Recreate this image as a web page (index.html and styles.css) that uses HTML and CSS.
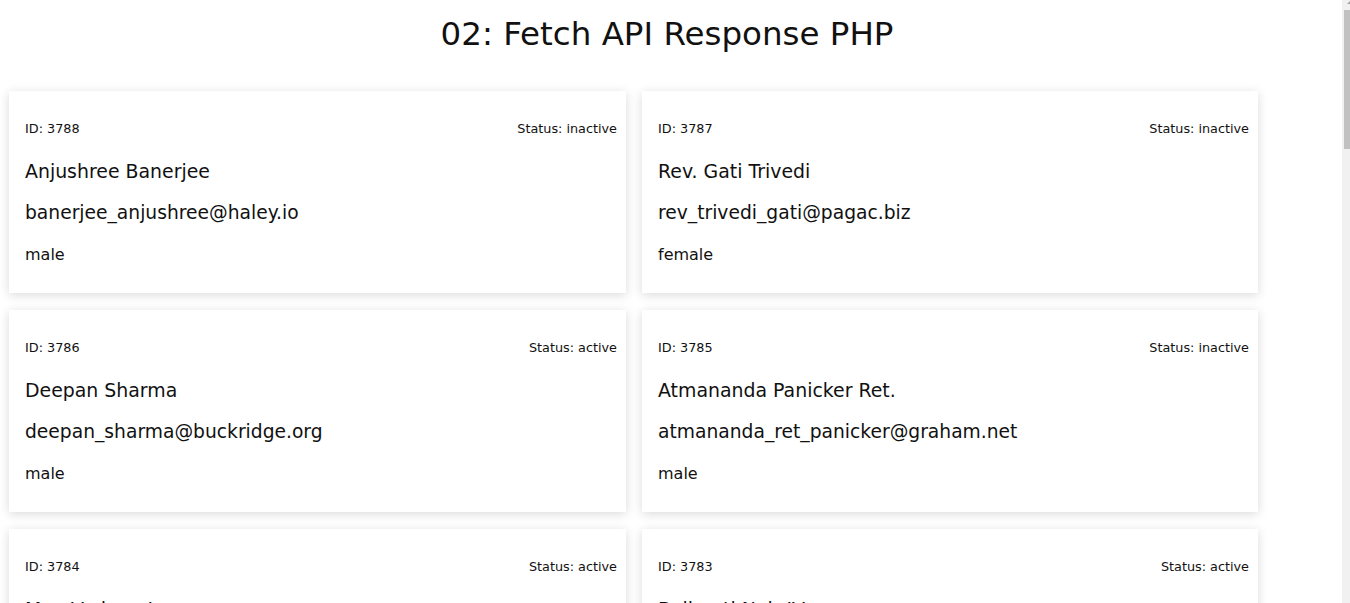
FILE: index.html
```html
<!DOCTYPE html>
<html lang="en">
<head>
<meta charset="utf-8">
<title>02: Fetch API Response PHP</title>
<link rel="stylesheet" href="styles.css">
</head>
<body>
<h1 class="title">02: Fetch API Response PHP</h1>
<div class="grid">
  <div class="card"><div class="meta"><span>ID: 3788</span><span>Status: inactive</span></div><div class="name">Anjushree Banerjee</div><div class="email">banerjee_anjushree@haley.io</div><div class="gender">male</div></div>
  <div class="card"><div class="meta"><span>ID: 3787</span><span>Status: inactive</span></div><div class="name">Rev. Gati Trivedi</div><div class="email">rev_trivedi_gati@pagac.biz</div><div class="gender">female</div></div>
  <div class="card"><div class="meta"><span>ID: 3786</span><span>Status: active</span></div><div class="name">Deepan Sharma</div><div class="email">deepan_sharma@buckridge.org</div><div class="gender">male</div></div>
  <div class="card"><div class="meta"><span>ID: 3785</span><span>Status: inactive</span></div><div class="name">Atmananda Panicker Ret.</div><div class="email">atmananda_ret_panicker@graham.net</div><div class="gender">male</div></div>
  <div class="card"><div class="meta"><span>ID: 3784</span><span>Status: active</span></div><div class="name">Mrs. Vedang Iyer</div><div class="email">iyer_vedang_mrs@kuhn.info</div><div class="gender">male</div></div>
  <div class="card"><div class="meta"><span>ID: 3783</span><span>Status: active</span></div><div class="name">Balimati Nair IV</div><div class="email">iv_nair_balimati@wolff.com</div><div class="gender">female</div></div>
  <div class="card"><div class="meta"><span>ID: 3782</span><span>Status: inactive</span></div><div class="name">Gopal Menon</div><div class="email">menon_gopal@rath.co</div><div class="gender">male</div></div>
  <div class="card"><div class="meta"><span>ID: 3781</span><span>Status: active</span></div><div class="name">Chandrakin Pillai</div><div class="email">pillai_chandrakin@hand.name</div><div class="gender">female</div></div>
  <div class="card"><div class="meta"><span>ID: 3780</span><span>Status: inactive</span></div><div class="name">Dhanu Desai</div><div class="email">desai_dhanu@mertz.biz</div><div class="gender">male</div></div>
  <div class="card"><div class="meta"><span>ID: 3779</span><span>Status: active</span></div><div class="name">Ekaling Kapoor</div><div class="email">kapoor_ekaling@kozey.org</div><div class="gender">male</div></div>
  <div class="card"><div class="meta"><span>ID: 3778</span><span>Status: inactive</span></div><div class="name">Himadri Gupta</div><div class="email">gupta_himadri@lind.io</div><div class="gender">female</div></div>
  <div class="card"><div class="meta"><span>ID: 3777</span><span>Status: active</span></div><div class="name">Jitendra Reddy</div><div class="email">reddy_jitendra@bode.net</div><div class="gender">male</div></div>
  <div class="card"><div class="meta"><span>ID: 3776</span><span>Status: inactive</span></div><div class="name">Kamala Joshi</div><div class="email">joshi_kamala@hills.com</div><div class="gender">female</div></div>
  <div class="card"><div class="meta"><span>ID: 3775</span><span>Status: active</span></div><div class="name">Lakshman Bhat</div><div class="email">bhat_lakshman@ryan.info</div><div class="gender">male</div></div>
  <div class="card"><div class="meta"><span>ID: 3774</span><span>Status: inactive</span></div><div class="name">Mahesh Naik</div><div class="email">naik_mahesh@feest.co</div><div class="gender">male</div></div>
  <div class="card"><div class="meta"><span>ID: 3773</span><span>Status: active</span></div><div class="name">Nandini Agarwal</div><div class="email">agarwal_nandini@moen.biz</div><div class="gender">female</div></div>
  <div class="card"><div class="meta"><span>ID: 3772</span><span>Status: inactive</span></div><div class="name">Omprakash Rao</div><div class="email">rao_omprakash@walsh.org</div><div class="gender">male</div></div>
  <div class="card"><div class="meta"><span>ID: 3771</span><span>Status: active</span></div><div class="name">Padma Chopra</div><div class="email">chopra_padma@sauer.net</div><div class="gender">female</div></div>
  <div class="card"><div class="meta"><span>ID: 3770</span><span>Status: inactive</span></div><div class="name">Rajesh Verma</div><div class="email">verma_rajesh@veum.io</div><div class="gender">male</div></div>
  <div class="card"><div class="meta"><span>ID: 3769</span><span>Status: active</span></div><div class="name">Sarita Mishra</div><div class="email">mishra_sarita@kunze.com</div><div class="gender">female</div></div>
  <div class="card"><div class="meta"><span>ID: 3768</span><span>Status: inactive</span></div><div class="name">Tanvi Saxena</div><div class="email">saxena_tanvi@bins.info</div><div class="gender">female</div></div>
  <div class="card"><div class="meta"><span>ID: 3767</span><span>Status: active</span></div><div class="name">Uday Kulkarni</div><div class="email">kulkarni_uday@roob.co</div><div class="gender">male</div></div>
</div>
<div class="scrollbar"><div class="scroll-arrow"></div><div class="scroll-thumb"></div></div>
</body>
</html>
```
FILE: styles.css
```css
html, body {
  margin: 0;
  padding: 0;
  background: #ffffff;
}
body {
  font-family: "DejaVu Sans", "Noto Sans", sans-serif;
  color: #111;
  padding-right: 16px;
}
.title {
  margin: 0;
  padding-top: 14px;
  height: 77px;
  box-sizing: border-box;
  text-align: center;
  font-size: 32.5px;
  font-weight: 400;
  line-height: 40px;
}
.grid {
  display: grid;
  grid-template-columns: 617px 616px;
  column-gap: 16px;
  row-gap: 17px;
  margin: 14px 0 40px 9px;
}
.card {
  background: #fff;
  box-shadow: 0 2px 10px rgba(0, 0, 0, 0.15);
  padding: 17px 9px 17px 16px;
}
.meta {
  display: flex;
  justify-content: space-between;
  font-size: 12.8px;
  line-height: 42px;
}
.name {
  font-size: 18.9px;
  line-height: 42px;
}
.email {
  font-size: 18.7px;
  line-height: 42px;
}
.gender {
  font-size: 16px;
  line-height: 42px;
}
.scrollbar {
  position: fixed;
  top: 0;
  right: 0;
  width: 8px;
  height: 100%;
  background: #f1f1f1;
}
.scroll-arrow {
  position: absolute;
  top: 1px;
  right: 0;
  width: 0;
  height: 0;
  border-left: 3px solid transparent;
  border-bottom: 3px solid #a3a3a3;
}
.scroll-thumb {
  position: absolute;
  top: 10px;
  right: 0;
  width: 6px;
  height: 139px;
  background: #c1c1c1;
}
```
